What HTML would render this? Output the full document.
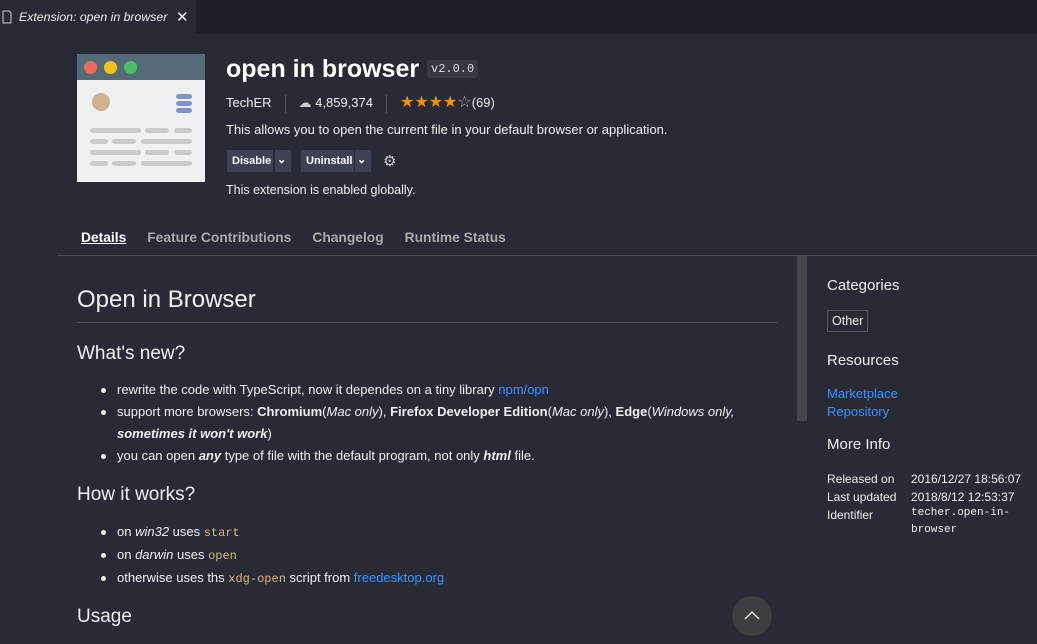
<!DOCTYPE html>
<html><head><meta charset="utf-8"><style>
*{margin:0;padding:0;box-sizing:border-box}
body{width:1037px;height:644px;overflow:hidden;background:#282a36;font-family:"Liberation Sans",sans-serif;color:#f0f0f0;font-size:13px;position:relative}
.tabbar{position:absolute;left:0;top:0;width:1037px;height:34px;background:#1e1f29}
.tab{position:absolute;left:0;top:0;width:196px;height:34px;background:#282a36;font-style:italic;font-size:12.3px;color:#f0f0f0;padding:10px 0 0 19px}
.tab .x{position:absolute;left:176px;top:8px;font-style:normal;font-size:15px}
.abs{position:absolute}
.icon{left:77px;top:54px;width:128px;height:128px;background:#eef1f2}
.icon .bar{position:absolute;left:0;top:0;width:128px;height:26px;background:#546a76}
.dot{position:absolute;top:7px;width:13px;height:13px;border-radius:50%}
.ln{position:absolute;height:5px;border-radius:3px;background:#c9ccce}
.title{left:226px;top:55px;font-size:25px;font-weight:bold;color:#fff}
.ver{left:427px;top:60px;background:#363844;border-radius:3px;font-family:"Liberation Mono",monospace;font-size:12px;padding:2px 4px;color:#ddd}
.meta{left:226px;top:92px;font-size:13px}
.sep{display:inline-block;width:1px;height:18px;background:#555;vertical-align:middle;margin:0 13px}
.btn{position:absolute;top:150px;height:22px;background:#3d4153;color:#fff;font-size:11px;font-weight:bold;padding:5px 5px 0}
.nav{top:230px;left:81px;font-size:13.8px;font-weight:bold;color:#aaa;white-space:nowrap}
.nav span{margin-right:21px}
.h{color:#f0f0f0}
ul{list-style:none}
li{position:relative;padding-left:40px;font-size:13px;line-height:22px}
li:before{content:"";position:absolute;left:24px;top:9px;width:5px;height:5px;border-radius:50%;background:#eee}
a{color:#3794ff;text-decoration:none}
code{font-family:"Liberation Mono",monospace;color:#d7ba7d;font-size:12px}
.side{left:827px;color:#f0f0f0}
</style></head><body>
<div class="tabbar"><div class="tab"><svg class="abs" style="left:2px;top:10px" width="10" height="14"><path d="M1 1h6l2 2v10H1z" fill="none" stroke="#ccc"/></svg>Extension: open in browser<span class="x">✕</span></div></div>

<div class="abs icon"><div class="bar"></div>
<div class="dot" style="left:7px;background:#ec6b5e"></div><div class="dot" style="left:27px;background:#f2c21b"></div><div class="dot" style="left:47px;background:#4bbd62"></div>
<div class="abs" style="left:15px;top:39px;width:18px;height:18px;border-radius:50%;background:#d0b18d"></div>
<div class="ln" style="left:99px;top:40px;width:16px;background:#8193c6"></div><div class="ln" style="left:99px;top:47px;width:16px;background:#8193c6"></div><div class="ln" style="left:99px;top:54px;width:16px;background:#8193c6"></div>
<div class="ln" style="left:13px;top:74px;width:51px"></div><div class="ln" style="left:68px;top:74px;width:24px"></div><div class="ln" style="left:97px;top:74px;width:18px"></div>
<div class="ln" style="left:13px;top:85px;width:18px"></div><div class="ln" style="left:35px;top:85px;width:24px"></div><div class="ln" style="left:64px;top:85px;width:51px"></div>
<div class="ln" style="left:13px;top:96px;width:51px"></div><div class="ln" style="left:68px;top:96px;width:24px"></div><div class="ln" style="left:97px;top:96px;width:18px"></div>
<div class="ln" style="left:13px;top:107px;width:18px"></div><div class="ln" style="left:35px;top:107px;width:24px"></div><div class="ln" style="left:64px;top:107px;width:51px"></div>
</div>
<div class="abs title">open in browser</div>
<div class="abs ver">v2.0.0</div>
<div class="abs meta">TechER<span class="sep"></span><span style="color:#ccc">☁</span> 4,859,374<span class="sep"></span><span style="color:#ff8e00;font-size:16px">★★★★</span><span style="color:#aaa;font-size:16px">☆</span>(69)</div>
<div class="abs" style="left:226px;top:122px">This allows you to open the current file in your default browser or application.</div>
<div class="btn" style="left:227px;width:46px">Disable</div><div class="btn" style="left:275px;width:16px;padding:3px 2px">⌄</div>
<div class="btn" style="left:301px;width:53px">Uninstall</div><div class="btn" style="left:355px;width:16px;padding:3px 2px">⌄</div>
<div class="abs" style="left:383px;top:152px;color:#ccc;font-size:15px">⚙</div>
<div class="abs" style="left:226px;top:183px;font-size:12.5px">This extension is enabled globally.</div>
<div class="abs nav"><span style="color:#fff;text-decoration:underline">Details</span><span>Feature Contributions</span><span>Changelog</span><span>Runtime Status</span></div>
<div class="abs" style="left:57px;top:255px;width:980px;height:1px;background:#4a4c57"></div>
<div class="abs" style="left:797px;top:256px;width:10px;height:165px;background:#45474f"></div>

<div class="abs h" style="left:77px;top:286px;font-size:24px">Open in Browser</div>
<div class="abs" style="left:77px;top:322px;width:700px;height:1px;background:#4a4c57"></div>
<div class="abs h" style="left:77px;top:343px;font-size:19px">What's new?</div>
<ul class="abs" style="left:77px;top:379px;width:700px">
<li>rewrite the code with TypeScript, now it dependes on a tiny library <a>npm/opn</a></li>
<li>support more browsers: <b>Chromium</b>(<i>Mac only</i>), <b>Firefox Developer Edition</b>(<i>Mac only</i>), <b>Edge</b>(<i>Windows only, <b>sometimes it won't work</b></i>)</li>
<li>you can open <b><i>any</i></b> type of file with the default program, not only <b><i>html</i></b> file.</li>
</ul>
<div class="abs h" style="left:77px;top:484px;font-size:19px">How it works?</div>
<ul class="abs" style="left:77px;top:521px;width:700px;line-height:23px">
<li>on <i>win32</i> uses <code>start</code></li>
<li>on <i>darwin</i> uses <code>open</code></li>
<li>otherwise uses ths <code>xdg-open</code> script from <a>freedesktop.org</a></li>
</ul>
<div class="abs h" style="left:77px;top:606px;font-size:19px">Usage</div>
<div class="abs" style="left:732px;top:596px;width:40px;height:40px;border-radius:50%;background:#3d3e42"><svg width="40" height="40"><path d="M13 23l7-7 7 7" fill="none" stroke="#ddd" stroke-width="1.5"/></svg></div>

<div class="abs side" style="top:277px;font-size:15px">Categories</div>
<div class="abs side" style="top:310px;border:1px solid #555;padding:3px 4px;font-size:12.5px">Other</div>
<div class="abs side" style="top:352px;font-size:15px">Resources</div>
<div class="abs side" style="top:385px;line-height:18px"><a>Marketplace</a><br><a>Repository</a></div>
<div class="abs side" style="top:436px;font-size:15px">More Info</div>
<div class="abs side" style="top:470px;font-size:12px;line-height:18px">Released on<br>Last updated<br>Identifier</div>
<div class="abs" style="left:911px;top:470px;font-size:12px;line-height:18px">2016/12/27 18:56:07<br>2018/8/12 12:53:37</div>
<div class="abs" style="left:911px;top:505px;font-family:'Liberation Mono',monospace;font-size:11px;line-height:17px">techer.open-in-<br>browser</div>
</body></html>
